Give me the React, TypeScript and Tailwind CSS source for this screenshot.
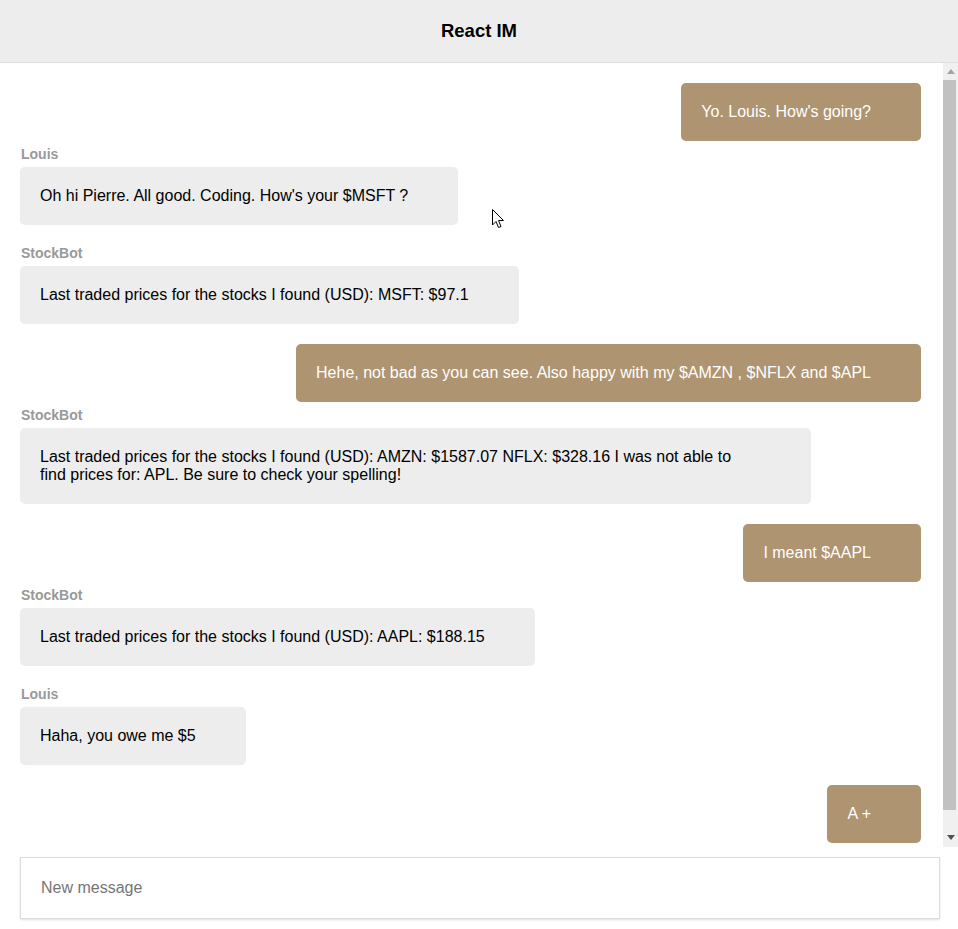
import React from "react";

type Msg = { own: boolean; name?: string; text: string };

const messages: Msg[] = [
  { own: true, text: "Yo. Louis. How's going?" },
  { own: false, name: "Louis", text: "Oh hi Pierre. All good. Coding. How's your $MSFT ?" },
  { own: false, name: "StockBot", text: "Last traded prices for the stocks I found (USD): MSFT: $97.1" },
  { own: true, text: "Hehe, not bad as you can see. Also happy with my $AMZN , $NFLX and $APL" },
  {
    own: false,
    name: "StockBot",
    text: "Last traded prices for the stocks I found (USD): AMZN: $1587.07 NFLX: $328.16 I was not able to find prices for: APL. Be sure to check your spelling!",
  },
  { own: true, text: "I meant $AAPL" },
  { own: false, name: "StockBot", text: "Last traded prices for the stocks I found (USD): AAPL: $188.15" },
  { own: false, name: "Louis", text: "Haha, you owe me $5" },
  { own: true, text: "A +" },
];

function Message({ m }: { m: Msg }) {
  if (m.own) {
    return (
      <div className="flex justify-end mb-[5px]">
        <div className="bg-[#ae9470] text-white rounded-[5px] pl-[20px] pr-[50px] pt-[20px] pb-[20px] text-[16px] leading-[18px]">
          {m.text}
        </div>
      </div>
    );
  }
  return (
    <div className="flex flex-col items-start mb-[20px]">
      <div className="text-[14px] leading-[16px] font-bold text-[#999999] pl-[1px] mb-[5px]">{m.name}</div>
      <div className="bg-[#ededed] text-black rounded-[5px] pl-[20px] pr-[50px] pt-[20px] pb-[20.5px] text-[16px] leading-[17.5px] max-w-[791px]">
        {m.text}
      </div>
    </div>
  );
}

export default function App() {
  return (
    <div
      className="relative w-[958px] h-[929px] flex flex-col bg-white overflow-hidden"
      style={{ fontFamily: '"Liberation Sans", Arial, sans-serif' }}
    >
      <div className="h-[63px] shrink-0 bg-[#ededed] border-b border-[#dddddd] flex items-center justify-center">
        <span className="text-[18.5px] font-bold text-black">React IM</span>
      </div>
      <div className="flex h-[784px] shrink-0">
        <div className="flex-1 overflow-hidden pt-[20px] pl-[20px] pr-[22px]">
          {messages.map((m, i) => (
            <Message key={i} m={m} />
          ))}
        </div>
        <div className="w-[15px] shrink-0 bg-[#f0f0f0] flex flex-col">
          <div className="h-[17px] flex items-center justify-center">
            <svg width="8" height="5" viewBox="0 0 8 5">
              <path d="M0 5 L4 0 L8 5 Z" fill="#a3a3a3" />
            </svg>
          </div>
          <div className="h-[730px] mr-[2px] bg-[#c1c1c1]" />
          <div className="flex-1 flex items-end justify-center pb-[7px]">
            <svg width="8" height="5" viewBox="0 0 8 5">
              <path d="M0 0 L8 0 L4 5 Z" fill="#505050" />
            </svg>
          </div>
        </div>
      </div>
      <div className="pt-[10px] pl-[20px] pr-[18px]">
        <div className="h-[62px] border border-[#dcdcdc] shadow-[0_1px_2px_rgba(0,0,0,0.12)] flex items-center pl-[20px]">
          <input
            className="w-full outline-none text-[16px] placeholder:text-[#757575] bg-transparent"
            placeholder="New message"
            style={{ fontFamily: '"Liberation Sans", Arial, sans-serif' }}
          />
        </div>
      </div>
      <svg
        className="absolute left-[492px] top-[209px]"
        width="13"
        height="20"
        viewBox="0 0 13 20"
      >
        <path
          d="M0.5 0.5 L0.5 16 L4 12.5 L6.5 18.5 L9 17.5 L6.5 11.5 L11.5 11.5 Z"
          fill="white"
          stroke="black"
          strokeWidth="1"
          strokeLinejoin="miter"
        />
      </svg>
    </div>
  );
}
